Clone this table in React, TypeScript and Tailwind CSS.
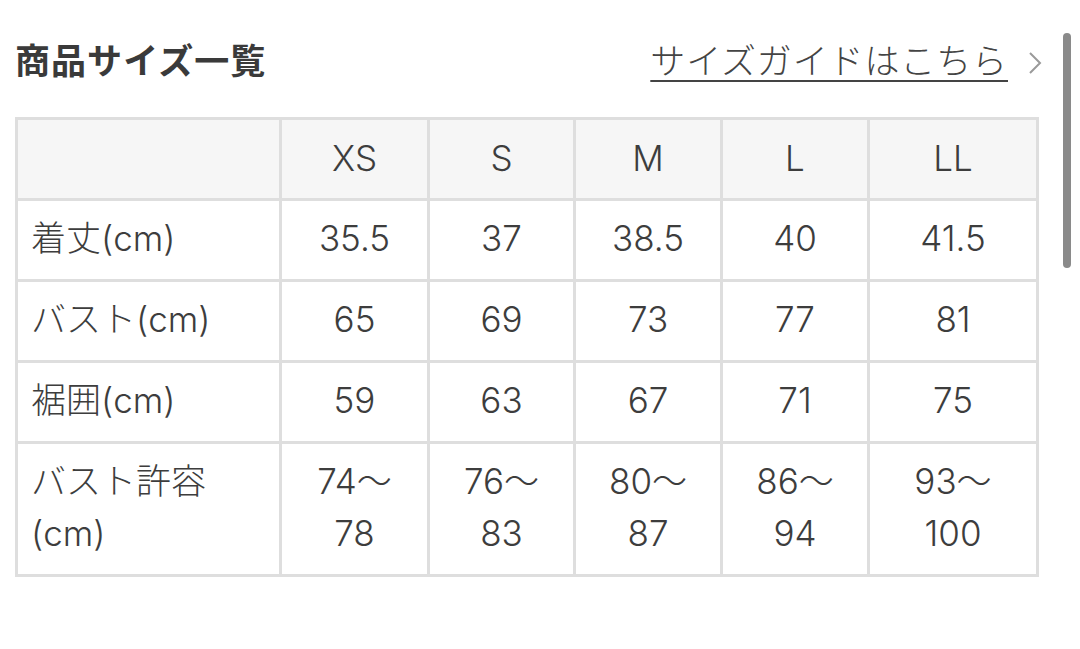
import React from 'react';

const sizes = ['XS', 'S', 'M', 'L', 'LL'];

const rows: { label: React.ReactNode; values: React.ReactNode[] }[] = [
  { label: '着丈(cm)', values: ['35.5', '37', '38.5', '40', '41.5'] },
  { label: 'バスト(cm)', values: ['65', '69', '73', '77', '81'] },
  { label: '裾囲(cm)', values: ['59', '63', '67', '71', '75'] },
  {
    label: (<>バスト許容<br />(cm)</>),
    values: [
      (<>74～<br />78</>),
      (<>76～<br />83</>),
      (<>80～<br />87</>),
      (<>86～<br />94</>),
      (<>93～<br />100</>),
    ],
  },
];

export default function App() {
  return (
    <div
      className="relative w-[1080px] h-[649px] bg-white overflow-hidden text-[#3d3d3d]"
      style={{ fontFamily: 'Inter, "Noto Sans CJK JP", sans-serif' }}
    >
      {/* Header */}
      <div className="flex justify-between items-start pl-[15px] pr-[38px] pt-[35px] h-[117px]">
        <h2 className="text-[35px] font-bold leading-[52px] tracking-[0.03em] text-[#3a3a3a]">商品サイズ一覧</h2>
        <a className="flex items-center gap-[20px] text-[35px] leading-[52px] text-[#444] tracking-[0.025em] font-light">
          <span className="underline decoration-[2px] underline-offset-[6px]">サイズガイドはこちら</span>
          <svg width="14" height="24" viewBox="0 0 14 24" className="mt-[4px]">
            <path d="M2 2 L12 12 L2 22" fill="none" stroke="#9a9a9a" strokeWidth="2" />
          </svg>
        </a>
      </div>

      {/* Size table */}
      <div className="pl-[15px]">
        <table className="table-fixed w-[1021px] border-collapse border-[3px] border-[#dedede] text-[35px] leading-[52px] font-light">
          <colgroup>
            <col className="w-[264px]" />
            <col className="w-[148px]" />
            <col className="w-[146px]" />
            <col className="w-[147px]" />
            <col className="w-[147px]" />
            <col className="w-[169px]" />
          </colgroup>
          <thead>
            <tr className="bg-[#f6f6f6] h-[81px]">
              <th className="border-[3px] border-[#dedede]"></th>
              {sizes.map(s => (
                <th key={s} className="border-[3px] border-[#dedede] font-light text-center pb-[3px]">{s}</th>
              ))}
            </tr>
          </thead>
          <tbody>
            {rows.map((r, i) => (
              <tr key={i}>
                <td className="border-[3px] border-[#dedede] pl-[13px] pt-[11px] pb-[15px] text-left">{r.label}</td>
                {r.values.map((v, j) => (
                  <td key={j} className="border-[3px] border-[#dedede] pt-[11px] pb-[15px] text-center">{v}</td>
                ))}
              </tr>
            ))}
          </tbody>
        </table>
      </div>

      {/* Scroll indicator */}
      <div className="absolute left-[1063px] top-[33px] w-[8px] h-[235px] rounded-full bg-[#8a8a8a]"></div>
    </div>
  );
}
